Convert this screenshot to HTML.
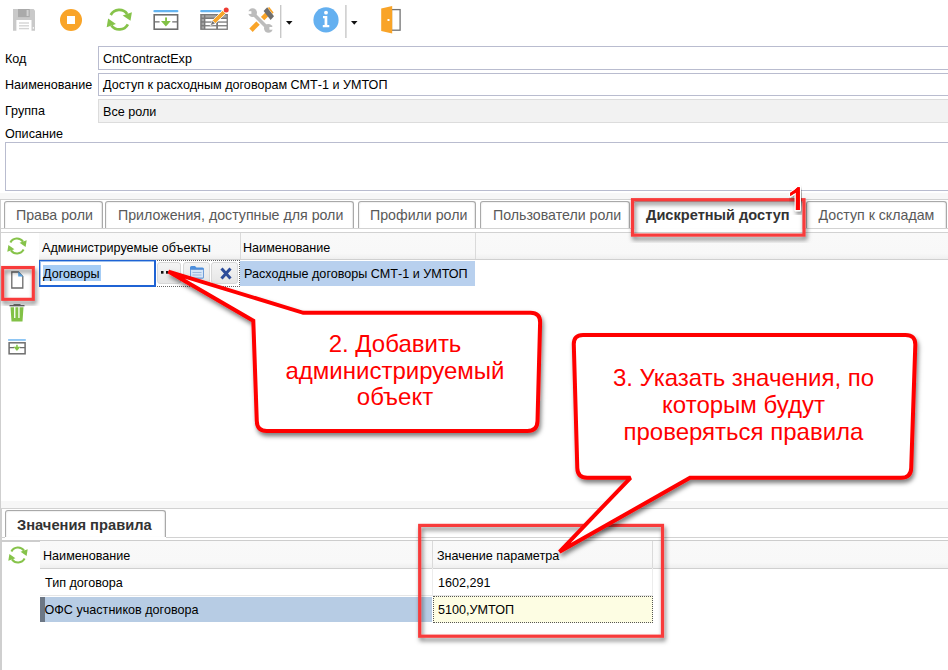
<!DOCTYPE html>
<html><head><meta charset="utf-8">
<style>
html,body{margin:0;padding:0;width:948px;height:670px;overflow:hidden;background:#fff;position:relative;font-family:"Liberation Sans",sans-serif;color:#000}
.a{position:absolute}
.t{position:absolute;white-space:nowrap;line-height:1}
.lbl{font-size:12.6px}
.fld{position:absolute;left:98px;width:860px;border:1px solid #b9bccf;box-sizing:border-box;background:#fff}
.tab{position:absolute;top:201px;height:28px;border:1px solid #a9a9a9;border-bottom:none;border-radius:3px 3px 0 0;box-sizing:border-box;background:#fff;box-shadow:inset -1px 0 1px rgba(0,0,0,0.10), inset 1px 1px 1px rgba(0,0,0,0.05)}
.tabt{position:absolute;white-space:nowrap;line-height:1;font-size:14.2px;color:#595959}
.hl{position:absolute;height:1px;background:#d2d2d2}
.vl{position:absolute;width:1px;background:#d2d2d2}
.g{font-size:12.6px}
</style></head><body>

<!-- toolbar -->
<svg class="a" style="left:0;top:0" width="420" height="42" viewBox="0 0 420 42">
  <!-- floppy -->
  <path d="M13 9h20.5l1.5 1.5v20.3h-22z" fill="#c9c9c9"/>
  <rect x="18" y="9" width="11.7" height="8.1" fill="#aaaaaa"/>
  <rect x="26.6" y="10" width="2" height="6" fill="#d2d2d2"/>
  <rect x="16.4" y="20" width="15.1" height="11" fill="#fff"/>
  <rect x="19" y="22.3" width="10" height="1.4" fill="#d4d4d4"/>
  <rect x="19" y="25.1" width="10" height="1.4" fill="#d4d4d4"/>
  <rect x="19" y="27.9" width="10" height="1.4" fill="#d4d4d4"/>
  <rect x="32.8" y="27" width="1" height="1.8" fill="#fff"/>
  <!-- stop -->
  <circle cx="71" cy="20" r="11" fill="#f9a428"/>
  <rect x="67" y="16" width="8" height="8" fill="#fff"/>
  <!-- refresh -->
  <use href="#rf" x="106.3" y="6.7" width="26" height="26"/>
  <!-- insert row -->
  <rect x="153.4" y="10" width="25" height="2.2" rx="1" fill="#64b4f0"/>
  <rect x="154.2" y="14.8" width="23.4" height="14.4" fill="none" stroke="#6e6e6e" stroke-width="1.6"/>
  <path d="M154 21.8h5.6M172.2 21.8h5.6" stroke="#6e6e6e" stroke-width="1.2"/>
  <path d="M161 21h9.8l-4.9 5.4z" fill="#82c146"/>
  <rect x="165.1" y="17.2" width="1.9" height="4.2" rx="0.9" fill="#82c146"/>
  <!-- table edit -->
  <rect x="200.2" y="10" width="21.5" height="2.3" rx="1" fill="#64b4f0"/>
  <rect x="200.2" y="14" width="27.7" height="15.9" fill="#7a7a7a"/>
  <g fill="#a8a8a8">
    <rect x="201.7" y="15.3" width="2.3" height="2.2"/><rect x="205.4" y="15.3" width="10.8" height="2.2"/><rect x="218" y="15.3" width="8.6" height="2.2"/>
    <rect x="201.7" y="19" width="2.3" height="2.2"/><rect x="201.7" y="22.7" width="2.3" height="2.2"/><rect x="201.7" y="26.4" width="2.3" height="2.2"/>
  </g>
  <g fill="#fff">
    <rect x="205.4" y="19" width="10.8" height="2.4"/><rect x="218" y="19" width="8.6" height="2.4"/>
    <rect x="205.4" y="22.7" width="10.8" height="2.4"/><rect x="218" y="22.7" width="8.6" height="2.4"/>
    <rect x="205.4" y="26.4" width="10.8" height="2.2"/><rect x="218" y="26.4" width="8.6" height="2.2"/>
  </g>
  <path d="M215.3 23.6 L212.3 20.6 L222.7 10.4 L225.7 13.4 Z" fill="#f7a52a" stroke="#fff" stroke-width="0.8"/>
  <path d="M210.2 25.7 L215.3 23.6 L212.3 20.6 Z" fill="#707070" stroke="#fff" stroke-width="0.6"/>
  <circle cx="226.2" cy="9.9" r="2.5" fill="#ee3b32"/>
  <!-- tools -->
  <path d="M251 30.2 L267.6 13.6" stroke="#f9a428" stroke-width="4.8"/>
  <path d="M263.6 11 L267.2 7.2 L274 16.2 L270.6 19.9 Z" fill="#6e6e6e"/>
  <path d="M267.9 8.1 L269.2 7 L273.6 12.6 L272.5 13.8 Z" fill="#f9a428"/>
  <path d="M254 14.5 L267 27.5" stroke="#fff" stroke-width="6.4"/>
  <path d="M254 14.5 L267 27.5" stroke="#bcbcbc" stroke-width="3.6"/>
  <circle cx="252.6" cy="12.6" r="4.4" fill="#bcbcbc"/>
  <rect x="246" y="11.2" width="5.4" height="2.7" fill="#fff"/>
  <circle cx="268.4" cy="28.3" r="4.4" fill="#bcbcbc"/>
  <rect x="269.4" y="27" width="5.4" height="2.7" fill="#fff"/>
  <rect x="280" y="5" width="1.4" height="33" fill="#c8c8c8"/>
  <path d="M286 21h6.5l-3.25 3.7z" fill="#111"/>
  <!-- info -->
  <circle cx="326" cy="19.9" r="12.6" fill="#64b0f0"/>
  <circle cx="326" cy="12.7" r="1.9" fill="#fff"/>
  <path d="M323 16h4.3v9h2v2.2h-6.5v-2.2h1.8v-6.8h-1.6z" fill="#fff"/>
  <rect x="345.2" y="5" width="1.4" height="33" fill="#c8c8c8"/>
  <path d="M351 21h6.5l-3.25 3.7z" fill="#111"/>
  <!-- door -->
  <rect x="391.5" y="9.6" width="8.6" height="20.6" fill="none" stroke="#747474" stroke-width="1.3"/>
  <path d="M381.2 8.4 L392.2 6 L392.2 33.4 L381.2 31 Z" fill="#f9a428"/>
  <rect x="387.5" y="19" width="2" height="2" fill="#fff"/>
</svg>

<!-- form -->
<div class="t lbl" style="left:5px;top:53px">Код</div>
<div class="fld" style="top:46px;height:24px"></div>
<div class="t lbl" style="left:103px;top:53px">CntContractExp</div>

<div class="t lbl" style="left:5px;top:79px">Наименование</div>
<div class="fld" style="top:73px;height:23px"></div>
<div class="t lbl" style="left:103px;top:79px">Доступ к расходным договорам СМТ-1 и УМТОП</div>

<div class="t lbl" style="left:5px;top:105px">Группа</div>
<div class="fld" style="top:99px;height:24px;border-color:#dcdcdc;background:#f2f2f2"></div>
<div class="t lbl" style="left:103px;top:106px">Все роли</div>

<div class="t lbl" style="left:5px;top:128px">Описание</div>
<div class="a" style="left:5px;top:142px;width:960px;height:49px;border:1px solid #b9bccf;box-sizing:border-box"></div>

<!-- splitter band -->
<div class="a" style="left:0;top:193px;width:948px;height:6px;background:#f7f7f7"></div>
<div class="hl" style="left:0;top:199px;width:948px"></div>
<div class="vl" style="left:0;top:199px;height:310px;width:1px;background:#cfcfcf"></div>
<div class="vl" style="left:0;top:508px;height:162px;width:1.6px;background:#cfcfcf"></div>

<!-- tabs -->
<div class="tab" style="left:4px;width:99px"></div>
<div class="tabt" style="left:16px;top:208px">Права роли</div>
<div class="tab" style="left:105px;width:249px"></div>
<div class="tabt" style="left:118px;top:208px">Приложения, доступные для роли</div>
<div class="tab" style="left:358px;width:118px"></div>
<div class="tabt" style="left:370px;top:208px">Профили роли</div>
<div class="tab" style="left:480px;width:150px"></div>
<div class="tabt" style="left:493px;top:208px">Пользователи роли</div>
<div class="tab" style="left:633px;width:171px"></div>
<div class="tabt" style="left:646px;top:207.5px;font-weight:bold;color:#333;font-size:14.6px">Дискретный доступ</div>
<div class="tab" style="left:806px;width:141px"></div>
<div class="tabt" style="left:818.5px;top:208px">Доступ к складам</div>
<div class="hl" style="left:1px;top:228px;width:633px"></div>
<div class="hl" style="left:804px;top:228px;width:144px"></div>
<div class="hl" style="left:1px;top:232px;width:947px"></div>

<!-- left toolbar upper -->
<svg class="a" style="left:0;top:0;width:0;height:0">
  <defs>
    <symbol id="rf" viewBox="-10 -10 20 20" overflow="visible">
      <g fill="none" stroke="#86c34a" stroke-width="2.1">
        <path d="M-6.6 -3.6 A7.5 7.5 0 0 1 6.07 -4.41"/>
        <path d="M6.6 3.6 A7.5 7.5 0 0 1 -6.07 4.41"/>
      </g>
      <path d="M9.7 -5.8 L8.6 0.9 L2.6 -3.3 Z M-9.7 5.8 L-8.6 -0.9 L-2.6 3.3 Z" fill="#86c34a"/>
    </symbol>
  </defs>
</svg>
<svg class="a" style="left:0;top:233px" width="38" height="130" viewBox="0 233 38 130">
  <use href="#rf" x="7" y="236" width="20" height="20"/>
  <!-- new doc -->
  <path d="M11.8 272 h6.6 l4.4 4.4 v11.6 h-11 z" fill="#fff" stroke="#6a6a6a" stroke-width="1.3"/>
  <path d="M18.2 271.4 L23.4 276.6 L18.2 276.6 Z" fill="#5aa6e6"/>
  <!-- trash -->
  <rect x="9.5" y="305" width="15" height="1.4" fill="#666"/>
  <rect x="13.5" y="304" width="7" height="1.2" fill="#777"/>
  <path d="M10.5 307.3 h13 l-1 14.2 h-11 z M14.1 307.3 v10.7 h1.3 v-10.7 z M18.3 307.3 v10.7 h1.3 v-10.7 z" fill="#82c146" fill-rule="evenodd"/>
  <!-- add row -->
  <rect x="8.1" y="339" width="17.7" height="1.9" fill="#8ec6f4"/>
  <rect x="9.1" y="342.8" width="16" height="11" fill="none" stroke="#6e6e6e" stroke-width="1.5"/>
  <path d="M9 347.6h5M20 347.6h5" stroke="#6e6e6e" stroke-width="1.2"/>
  <path d="M13.4 346.7h7.1l-3.55 4.3z" fill="#82c146"/>
  <rect x="16.2" y="344.8" width="1.5" height="3" fill="#82c146"/>
</svg>

<!-- top grid header -->
<div class="a" style="left:39px;top:233px;width:909px;height:27px;background:linear-gradient(#f9f9f9 0%,#f8f8f8 80%,#efefef 100%);border-bottom:1px solid #d0d0d0;box-sizing:border-box"></div>
<div class="vl" style="left:240px;top:233px;height:26px;background:#dadada"></div>
<div class="vl" style="left:475px;top:233px;height:26px;background:#dadada"></div>
<div class="t g" style="left:42px;top:242px">Администрируемые объекты</div>
<div class="t g" style="left:243px;top:242px">Наименование</div>

<!-- edit row -->
<div class="a" style="left:39px;top:260px;width:201px;height:27px;border:1px dotted #666;box-sizing:border-box"></div>
<div class="a" style="left:39px;top:260px;width:117px;height:27px;border:1px solid #1f63d4;border-right-width:2px;border-bottom-width:2px;box-shadow:inset 1px 1px 0 #9cc0ee;box-sizing:border-box;background:#fff"></div>
<div class="a" style="left:43px;top:265px;width:58px;height:16px;background:#a6cdf5"></div>
<div class="t g" style="left:43px;top:268px">Договоры</div>
<div class="a" style="left:157px;top:262px;width:24px;height:22px;background:linear-gradient(#f4f4f4,#e6e6e6);border:1px solid #d8d8d8;border-radius:3px;box-sizing:border-box"></div>
<div class="a" style="left:183px;top:262px;width:27px;height:22px;background:linear-gradient(#f4f4f4,#e6e6e6);border:1px solid #d8d8d8;border-radius:3px;box-sizing:border-box"></div>
<div class="a" style="left:211px;top:262px;width:27px;height:22px;background:linear-gradient(#f4f4f4,#e6e6e6);border:1px solid #d8d8d8;border-radius:3px;box-sizing:border-box"></div>
<svg class="a" style="left:150px;top:255px" width="95" height="35" viewBox="150 255 95 35">
  <rect x="161" y="271" width="2.5" height="2.7" fill="#111"/>
  <rect x="166" y="271" width="2.5" height="2.7" fill="#111"/>
  <path d="M190 267.5 q0-1.5 1.5-1.5 h3.5 l1.5 1.5 h6 q1.5 0 1.5 1.5 v8 q0 1.5-1.5 1.5 h-11 q-1.5 0-1.5-1.5z" fill="#4d8fdc"/>
  <rect x="190.5" y="269.5" width="13" height="8.5" rx="1" fill="#d6e6f8" stroke="#6c9ad6" stroke-width="0.9"/>
  <path d="M192.5 272.5h9M192.5 275h9" stroke="#9db9de" stroke-width="1"/>
  <path d="M221.5 268.5 L230.5 278.5 M230.5 268.5 L221.5 278.5" stroke="#2d4c9a" stroke-width="3"/>
</svg>
<div class="a" style="left:240px;top:261px;width:235px;height:25px;background:#b8d0ee"></div>
<div class="t g" style="left:244px;top:268px">Расходные договоры СМТ-1 и УМТОП</div>

<!-- lower splitter -->
<div class="a" style="left:1px;top:501px;width:947px;height:7px;background:#f7f7f7"></div>
<div class="hl" style="left:1px;top:508px;width:947px"></div>

<!-- lower tab -->
<div class="tab" style="left:5px;top:510px;width:161px;height:27px"></div>
<div class="tabt" style="left:17px;top:517.5px;font-weight:bold;color:#333;font-size:14.7px">Значения правила</div>
<div class="hl" style="left:1px;top:537px;width:4px"></div>
<div class="hl" style="left:166px;top:537px;width:782px"></div>
<div class="hl" style="left:1px;top:540px;width:947px;height:1.5px;background:#cdcdcd"></div>

<!-- lower refresh -->
<svg class="a" style="left:0;top:541px" width="38" height="30" viewBox="0 541 38 30">
  <use href="#rf" x="8" y="545" width="20" height="20"/>
</svg>

<!-- lower grid header -->
<div class="a" style="left:40px;top:541px;width:908px;height:28px;background:linear-gradient(#f9f9f9 0%,#f8f8f8 80%,#efefef 100%);border-bottom:1px solid #d0d0d0;box-sizing:border-box"></div>
<div class="vl" style="left:432px;top:541px;height:27px;background:#dadada"></div>
<div class="vl" style="left:652px;top:541px;height:27px;background:#dadada"></div>
<div class="t g" style="left:43px;top:550px">Наименование</div>
<div class="t g" style="left:437px;top:550px">Значение параметра</div>

<div class="t g" style="left:45px;top:577px">Тип договора</div>
<div class="t g" style="left:438px;top:577px">1602,291</div>
<div class="hl" style="left:40px;top:595px;width:612px;background:#e6e6e6"></div>
<div class="vl" style="left:432px;top:568px;height:27px;background:#ececec"></div>
<div class="vl" style="left:652px;top:568px;height:55px;background:#ececec"></div>

<div class="a" style="left:40px;top:597px;width:392px;height:25px;background:#b7cce4"></div>
<div class="a" style="left:40px;top:597px;width:4.6px;height:25px;background:#6c7785"></div>
<div class="a" style="left:433px;top:596px;width:220px;height:27px;background:#fdfde3;border:1px dotted #555;box-sizing:border-box"></div>
<div class="t g" style="left:44.5px;top:604px">ОФС участников договора</div>
<div class="t g" style="left:438px;top:604px">5100,УМТОП</div>

<!-- annotations -->
<svg class="a" style="left:0;top:0" width="948" height="670" viewBox="0 0 948 670">
  <defs>
    <filter id="sh" x="-10%" y="-10%" width="130%" height="130%">
      <feDropShadow dx="1.5" dy="3.3" stdDeviation="2.2" flood-color="#000" flood-opacity="0.5"/>
    </filter>
  </defs>
  <!-- red rects -->
  <rect x="632.5" y="199.7" width="171.5" height="35.4" fill="none" stroke="#f83b3b" stroke-width="3.2" filter="url(#sh)"/>
  <rect x="2.7" y="267.5" width="30.6" height="31.8" fill="none" stroke="#f83b3b" stroke-width="3.1" filter="url(#sh)"/>
  <rect x="419.7" y="525.4" width="242.8" height="110.8" fill="none" stroke="#f83b3b" stroke-width="3.2" filter="url(#sh)"/>
  <!-- callout 2 -->
  <path d="M303.3 312.8 L530.5 312.8 Q540.3 312.8 540.1 322.6 L537.5 421 Q537.3 431 527.3 431 L266.8 431 Q257 431 256.8 421 L253.3 320.7 L168.5 271.6 Z"
        fill="#fff" stroke="#ff0000" stroke-width="4" stroke-linejoin="miter" stroke-miterlimit="2.5" filter="url(#sh)"/>
  <!-- callout 3 -->
  <path d="M583 334.9 L905.5 334.9 Q915.5 334.9 915.3 344.9 L911.2 468 Q911 477.8 901 477.8 L690 477.8 L559.5 551.8 L630.5 477.8 L587.2 477.8 Q577.5 477.8 577.3 468 L573.8 344.5 Q573.6 334.9 583 334.9 Z"
        fill="#fff" stroke="#ff0000" stroke-width="4" stroke-linejoin="miter" stroke-miterlimit="2.5" filter="url(#sh)"/>
  <g font-family="Liberation Sans" font-size="24" fill="#ff0000" text-anchor="middle">
    <text x="395" y="352">2. Добавить</text>
    <text x="395" y="379">администрируемый</text>
    <text x="395" y="405">объект</text>
    <text x="743.5" y="386">3. Указать значения, по</text>
    <text x="743.5" y="413">которым будут</text>
    <text x="743.5" y="440">проверяться правила</text>
  </g>
  <path d="M797.6 187.2 L799.8 187.2 L799.8 210 L795.9 210 L795.9 192.4 L790.3 196 L790.1 193.1 Q794.8 190.2 797.6 187.2 Z" fill="#ff0000" stroke="#fff" stroke-width="2.4" paint-order="stroke" stroke-linejoin="round" filter="url(#sh)"/>
  <path d="M797.6 187.2 L799.8 187.2 L799.8 210 L795.9 210 L795.9 192.4 L790.3 196 L790.1 193.1 Q794.8 190.2 797.6 187.2 Z" fill="#ff0000"/>
</svg>

</body></html>
